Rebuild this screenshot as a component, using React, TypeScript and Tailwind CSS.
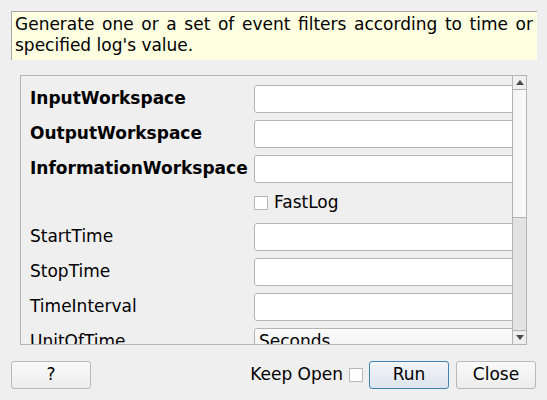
import { ReactNode } from "react"

const font = { fontFamily: "'DejaVu Sans', sans-serif" }

function Field({ label, bold }: { label: string; bold?: boolean }) {
  return (
    <>
      <div className={`flex h-[28px] items-center text-[17px] text-black ${bold ? "font-bold" : ""}`}>{label}</div>
      <div className="h-[28px] w-[300px] rounded-[3px] border border-[#b4b4b4] bg-white" />
    </>
  )
}

function Button({ children, primary }: { children: ReactNode; primary?: boolean }) {
  return (
    <div
      className={`flex h-[28px] w-[80px] items-center justify-center rounded-[3px] border text-[17px] text-black ${
        primary
          ? "border-[#3e83b8] bg-gradient-to-b from-[#f4f6f8] to-[#dde4ec]"
          : "border-[#b8b8b8] bg-gradient-to-b from-[#fafafa] to-[#ececec]"
      }`}
    >
      {children}
    </div>
  )
}

function Checkbox() {
  return <div className="h-[14px] w-[14px] border border-[#b8b8b8] bg-white" />
}

export default function App() {
  return (
    <div className="flex h-[400px] w-[547px] flex-col bg-[#efefef] text-black" style={font}>
      <div className="ml-[11px] mt-[11px] h-[49px] w-[526px] border-l border-t border-[#a8a8a8] bg-[#ffffe1] pl-[3px] pr-[4px] pt-[2px] text-justify text-[17px] leading-[21px]">
        Generate one or a set of event filters according to time or specified log's value.
      </div>

      <div className="ml-[20px] mt-[15px] flex h-[270px] w-[507px] overflow-hidden border border-[#b4b4b4]">
        <div className="flex-1 overflow-hidden">
          <div className="grid grid-cols-[224px_300px] gap-y-[7px] pl-[9px] pt-[9px]">
            <Field label="InputWorkspace" bold />
            <Field label="OutputWorkspace" bold />
            <Field label="InformationWorkspace" bold />
            <div className="h-[26px]" />
            <div className="flex h-[26px] items-center gap-[6px] text-[17px]">
              <Checkbox />
              <span>FastLog</span>
            </div>
            <Field label="StartTime" />
            <Field label="StopTime" />
            <Field label="TimeInterval" />
            <div className="flex h-[28px] items-center text-[17px]">UnitOfTime</div>
            <div className="flex h-[28px] w-[300px] items-center rounded-[3px] border border-[#b4b4b4] bg-gradient-to-b from-[#fbfbfb] to-[#f0f0f0] pl-[4px] text-[17px]">
              Seconds
            </div>
          </div>
        </div>
        <div className="flex w-[14px] flex-col border-l border-[#b4b4b4] bg-[#e3e3e3]">
          <div className="flex h-[14px] items-center justify-center border-b border-[#b4b4b4] bg-[#efefef]">
            <svg width="8" height="5" viewBox="0 0 8 5">
              <path d="M0 5 L4 0 L8 5 Z" fill="#4a4a4a" />
            </svg>
          </div>
          <div className="h-[128px] border-b border-[#b4b4b4] bg-gradient-to-r from-[#f4f4f4] to-[#fafafa]" />
          <div className="flex-1" />
          <div className="flex h-[14px] items-center justify-center border-t border-[#b4b4b4] bg-[#efefef]">
            <svg width="8" height="5" viewBox="0 0 8 5">
              <path d="M0 0 L8 0 L4 5 Z" fill="#4a4a4a" />
            </svg>
          </div>
        </div>
      </div>

      <div className="mt-[16px] flex items-center pl-[11px] pr-[11px]">
        <Button>?</Button>
        <div className="flex-1" />
        <span className="text-[17px]">Keep Open</span>
        <div className="ml-[6px] mr-[6px]">
          <Checkbox />
        </div>
        <Button primary>Run</Button>
        <div className="w-[7px]" />
        <Button>Close</Button>
      </div>
    </div>
  )
}
